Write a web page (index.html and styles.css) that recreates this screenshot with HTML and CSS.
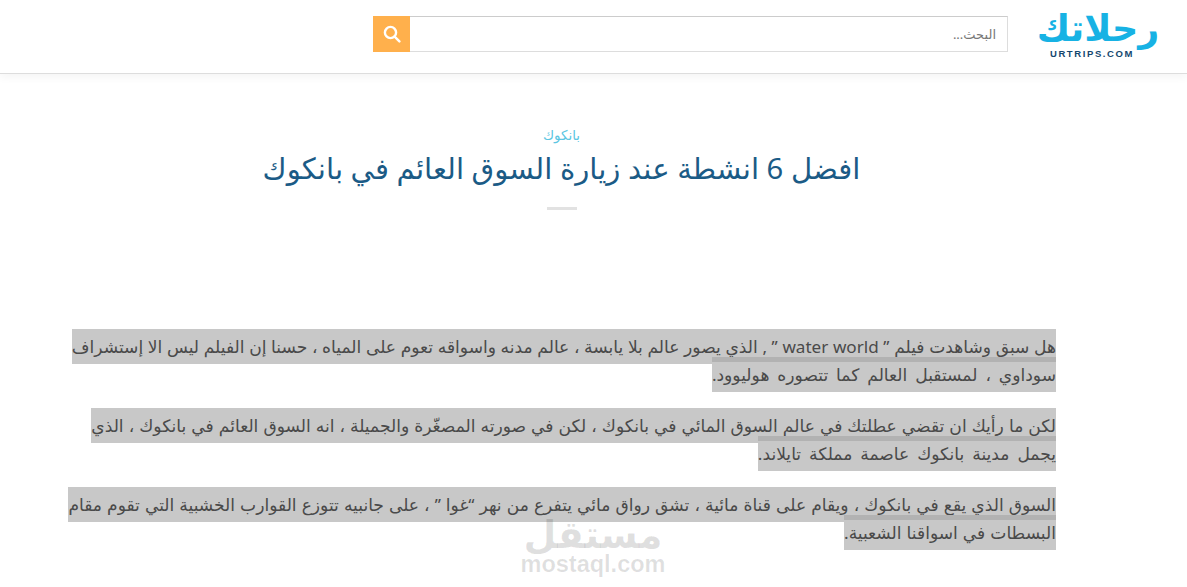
FILE: index.html
```html
<!DOCTYPE html>
<html lang="ar" dir="rtl">
<head>
  <meta charset="UTF-8">
  <title>افضل 6 انشطة عند زيارة السوق العائم في بانكوك</title>
  <link rel="stylesheet" href="styles.css">
</head>
<body>
  <header class="site-header">
    <a class="logo" href="#">
      <span class="logo-ar">رحلاتك</span>
      <span class="logo-en" dir="ltr">URTRIPS.COM</span>
    </a>
    <form class="search">
      <input type="text" placeholder="البحث...">
      <button type="button" aria-label="بحث">
        <svg width="18" height="18" viewBox="0 0 18 18" fill="none" stroke="#fff" stroke-width="2.4">
          <circle cx="7.5" cy="7.5" r="5.6"/>
          <path d="M11.6 11.6 16.4 16.4" stroke-linecap="round"/>
        </svg>
      </button>
    </form>
  </header>

  <main class="article">
    <div class="article-head">
      <a class="category" href="#">بانكوك</a>
      <h1>افضل 6 انشطة عند زيارة السوق العائم في بانكوك</h1>
      <div class="divider"></div>
    </div>

    <p><span class="ln tight">هل سبق وشاهدت فيلم ” water world ” , الذي يصور عالم بلا يابسة ، عالم مدنه واسواقه تعوم على المياه ، حسنا إن الفيلم ليس الا إستشراف</span><br><span class="ln wide">سوداوي ، لمستقبل العالم كما تتصوره هوليوود.</span></p>
    <p><span class="ln loose">لكن ما رأيك ان تقضي عطلتك في عالم السوق المائي في بانكوك ،  لكن في صورته المصغّرة والجميلة ، انه السوق العائم في بانكوك ، الذي</span><br><span class="ln wide">يجمل مدينة بانكوك عاصمة مملكة تايلاند.</span></p>
    <p><span class="ln">السوق الذي يقع في بانكوك ، ويقام على قناة مائية ، تشق رواق مائي يتفرع من نهر “غوا ” ، على جانبيه تتوزع القوارب الخشبية التي تقوم مقام</span><br><span class="ln">البسطات في اسواقنا الشعبية.</span></p>
  </main>

  <div class="watermark">
    <span class="wm-ar">مستقل</span>
    <span class="wm-en">mostaql.com</span>
  </div>
</body>
</html>
```

FILE: styles.css
```css
html, body {
  margin: 0;
  height: 587px;
  overflow: hidden;
}
body {
  font-family: "Noto Sans", "DejaVu Sans", sans-serif;
  background: #fff;
  color: #555;
}
.site-header {
  height: 68px;
  display: flex;
  align-items: center;
  padding: 0 29px 5px 0;
  border-bottom: 1px solid #ddd;
  box-shadow: 0 4px 8px #0000000a;
}
.logo {
  width: 120px;
  display: flex;
  flex-direction: column;
  align-items: center;
  text-decoration: none;
  margin-left: 30px;
}
.logo-ar {
  font-family: "DejaVu Sans", sans-serif;
  font-weight: bold;
  font-size: 36.5px;
  line-height: 39px;
  color: #17b2e4;
}
.logo-en {
  font-family: "Liberation Sans", sans-serif;
  font-weight: bold;
  font-size: 9.5px;
  line-height: 11px;
  letter-spacing: 1.6px;
  color: #14476e;
  margin-right: 12px;
}
.search {
  display: flex;
  height: 36px;
  width: 635px;
}
.search input {
  flex: 1;
  min-width: 0;
  border: 1px solid #ddd;
  border-top-color: #ccc;
  border-left: 0;
  padding: 0 11px;
  font-family: inherit;
  font-size: 13px;
  outline: none;
}
.search input::placeholder {
  color: #777;
}
.search button {
  width: 37px;
  background: #ffb04c;
  border: 0;
  padding: 0;
  display: flex;
  align-items: center;
  justify-content: center;
}
.article {
  padding: 0 131px 0 67px;
}
.article-head {
  text-align: center;
  padding-top: 52px;
  margin-bottom: 123px;
}
.category {
  display: block;
  font-size: 13.5px;
  line-height: 18px;
  color: #5cc6e2;
  text-decoration: none;
}
h1 {
  margin: 2px 0 0;
  font-size: 29.2px;
  line-height: 44px;
  font-weight: 400;
  color: #1b5b86;
}
.divider {
  width: 30px;
  height: 3px;
  background: #e2e2e2;
  margin: 17px auto 0;
}
p {
  margin: 0 0 23px;
  font-size: 17.1px;
  line-height: 28px;
  word-spacing: 0.6px;
  white-space: nowrap;
  color: #4a4a4a;
}
.ln {
  background: #c8c8c8;
  padding: 6px 0;
}
.ln + br + .ln {
  background: linear-gradient(#0000001c 5px, transparent 5px), #c8c8c8;
}
.wide {
  word-spacing: 3.5px;
}
.tight {
  word-spacing: 0.2px;
}
.loose {
  word-spacing: 0.6px;
}
.watermark {
  position: absolute;
  left: 521px;
  top: 517px;
  width: 144px;
  display: flex;
  flex-direction: column;
  align-items: center;
  color: #00000020;
  font-weight: bold;
  font-family: "DejaVu Sans", sans-serif;
  pointer-events: none;
}
.wm-ar {
  font-size: 38px;
  line-height: 36px;
}
.wm-en {
  font-family: "Liberation Sans", sans-serif;
  font-size: 23.5px;
  line-height: 22px;
}
```
